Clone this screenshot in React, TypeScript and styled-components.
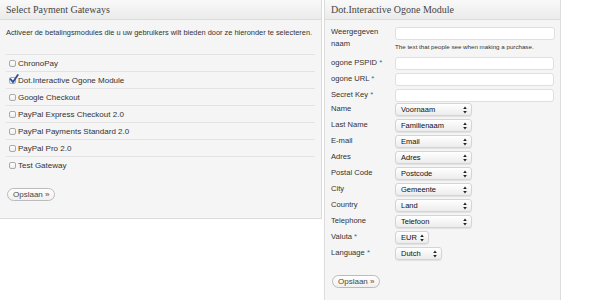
import styled, { createGlobalStyle } from "styled-components";

const GlobalStyle = createGlobalStyle`
  body {
    margin: 0;
    background: #fff;
    font-family: "Liberation Sans", Arial, sans-serif;
    color: #333;
  }
`;

const gateways = [
  { name: "ChronoPay", checked: false },
  { name: "Dot.Interactive Ogone Module", checked: true },
  { name: "Google Checkout", checked: false },
  { name: "PayPal Express Checkout 2.0", checked: false },
  { name: "PayPal Payments Standard 2.0", checked: false },
  { name: "PayPal Pro 2.0", checked: false },
  { name: "Test Gateway", checked: false },
];

const textFields = [
  { label: "ogone PSPID", required: true },
  { label: "ogone URL", required: true },
  { label: "Secret Key", required: true },
];

const selectFields = [
  { label: "Name", value: "Voornaam", width: 77 },
  { label: "Last Name", value: "Familienaam", width: 77 },
  { label: "E-mail", value: "Email", width: 77 },
  { label: "Adres", value: "Adres", width: 77 },
  { label: "Postal Code", value: "Postcode", width: 77 },
  { label: "City", value: "Gemeente", width: 77 },
  { label: "Country", value: "Land", width: 77 },
  { label: "Telephone", value: "Telefoon", width: 77 },
  { label: "Valuta", value: "EUR", width: 34, required: true },
  { label: "Language", value: "Dutch", width: 47, required: true },
];

function Arrows() {
  return (
    <ArrowSvg viewBox="0 0 4 8" width="4" height="8">
      <path d="M2 0.5 L3.8 3 L0.2 3 Z" fill="#222" />
      <path d="M2 7.5 L3.8 5 L0.2 5 Z" fill="#222" />
    </ArrowSvg>
  );
}

export default function App() {
  return (
    <>
      <GlobalStyle />
      <Page>
        <LeftPanel>
          <Header>Select Payment Gateways</Header>
          <Intro>
            Activeer de betalingsmodules die u uw gebruikers wilt bieden door ze hieronder te selecteren.
          </Intro>
          <GatewayList>
            {gateways.map((g) => (
              <GatewayRow key={g.name}>
                <CheckBox>
                  {g.checked && (
                    <CheckMark viewBox="0 0 10 10" width="10" height="10">
                      <path d="M1.5 5.2 L4 8 L8.8 1" stroke="#2a4f9e" strokeWidth="1.8" fill="none" strokeLinecap="round" />
                    </CheckMark>
                  )}
                </CheckBox>
                {g.name}
              </GatewayRow>
            ))}
          </GatewayList>
          <SaveButton>Opslaan »</SaveButton>
        </LeftPanel>

        <RightPanel>
          <Header>Dot.Interactive Ogone Module</Header>
          <Form>
            <FieldRow $gap={5}>
              <Label $twoLine>Weergegeven naam</Label>
              <FieldCol>
                <TextInput />
                <Hint>The text that people see when making a purchase.</Hint>
              </FieldCol>
            </FieldRow>
            {textFields.map((f, i) => (
              <FieldRow key={f.label} $gap={i === textFields.length - 1 ? 1 : 3}>
                <Label>
                  {f.label} {f.required && <Req>*</Req>}
                </Label>
                <TextInput />
              </FieldRow>
            ))}
            {selectFields.map((f) => (
              <FieldRow key={f.label} $gap={3}>
                <Label>
                  {f.label}
                  {f.required && <Req> *</Req>}
                </Label>
                <Select style={{ width: f.width }}>
                  <span>{f.value}</span>
                  <Arrows />
                </Select>
              </FieldRow>
            ))}
          </Form>
          <SaveButton>Opslaan »</SaveButton>
        </RightPanel>
      </Page>
    </>
  );
}

const Page = styled.div`
  display: flex;
  align-items: flex-start;
  gap: 2px;
  height: 300px;
  overflow: hidden;
`;

const Panel = styled.div`
  background: #f5f5f5;
  box-sizing: border-box;
`;

const LeftPanel = styled(Panel)`
  width: 322px;
  border-right: 1px solid #dcdcdc;
  border-bottom: 1px solid #dcdcdc;
  padding-bottom: 17px;
`;

const RightPanel = styled(Panel)`
  width: 237px;
  height: 300px;
  border-left: 1px solid #dcdcdc;
  border-right: 1px solid #dcdcdc;
`;

const Header = styled.div`
  height: 20px;
  box-sizing: border-box;
  padding-left: 6px;
  border-bottom: 1px solid #dcdcdc;
  background: linear-gradient(to bottom, #f9f9f9, #ebebeb);
  font-family: "Liberation Serif", "Times New Roman", serif;
  font-size: 10px;
  line-height: 20px;
  color: #464646;
`;

const Intro = styled.p`
  margin: 8px 6px 0;
  font-size: 7.4px;
  line-height: 10px;
  white-space: nowrap;
  color: #333;
`;

const GatewayList = styled.div`
  margin: 16px 6px 0;
`;

const GatewayRow = styled.div`
  display: flex;
  align-items: center;
  gap: 2px;
  height: 17px;
  box-sizing: border-box;
  padding-left: 3px;
  border-top: 1px solid #e3e3e3;
  font-size: 8px;
  color: #333;
`;

const CheckBox = styled.span`
  position: relative;
  width: 5px;
  height: 5px;
  border: 1px solid #aaa;
  border-radius: 2px;
  background: linear-gradient(to bottom, #fff, #eee);
  box-sizing: content-box;
  flex-shrink: 0;
`;

const CheckMark = styled.svg`
  position: absolute;
  left: -1px;
  top: -4px;
`;

const SaveButton = styled.button`
  display: block;
  height: 13px;
  margin: 15px 0 0 7px;
  padding: 0 5px;
  border: 1px solid #bbb;
  border-radius: 8px;
  background: linear-gradient(to bottom, #fff, #f0f0f0);
  font-family: "Liberation Sans", Arial, sans-serif;
  font-size: 8px;
  line-height: 11px;
  color: #464646;
  box-sizing: border-box;
`;

const Form = styled.div`
  padding: 7px 6px 0;
`;

const FieldRow = styled.div<{ $gap: number }>`
  display: flex;
  align-items: flex-start;
  margin-bottom: ${(p) => p.$gap}px;
`;

const Label = styled.div<{ $twoLine?: boolean }>`
  width: 64px;
  flex-shrink: 0;
  font-size: 7.6px;
  line-height: ${(p) => (p.$twoLine ? "12px" : "10px")};
  margin-top: ${(p) => (p.$twoLine ? "-1px" : "1px")};
  color: #333;
`;

const Req = styled.span`
  color: #21759b;
`;

const FieldCol = styled.div`
  display: flex;
  flex-direction: column;
`;

const TextInput = styled.div`
  width: 160px;
  height: 13px;
  box-sizing: border-box;
  background: #fff;
  border: 1px solid #dfdfdf;
  border-radius: 3px;
`;

const Hint = styled.div`
  margin-top: 2px;
  font-size: 6.2px;
  line-height: 10px;
  color: #333;
`;

const Select = styled.div`
  display: flex;
  align-items: center;
  justify-content: space-between;
  height: 13px;
  box-sizing: border-box;
  padding: 0 4px 0 5px;
  border: 1px solid #d4d4d4;
  border-radius: 3px;
  background: linear-gradient(to bottom, #fff, #ececec);
  box-shadow: 0 1px 1px rgba(0, 0, 0, 0.08);
  font-size: 7.5px;
  color: #111;
`;

const ArrowSvg = styled.svg`
  flex-shrink: 0;
`;
